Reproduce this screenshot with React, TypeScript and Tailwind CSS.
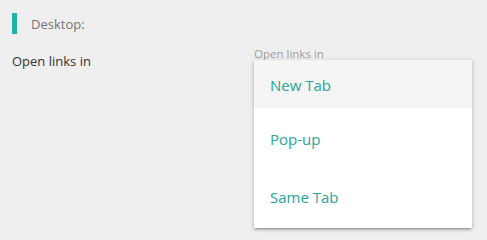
const OPTIONS = [
  { label: "New Tab", cls: "h-[48px] pt-[15px] bg-[#f5f5f5]" },
  { label: "Pop-up", cls: "h-[56px] pt-[21px] bg-white" },
  { label: "Same Tab", cls: "h-[64px] pt-[23px] bg-white" },
];

export default function App() {
  return (
    <div className="w-[487px] h-[240px] bg-[#efefef] font-['Open_Sans',sans-serif] overflow-hidden">
      <div className="flex items-center pt-[13px] pl-[12px]">
        <div className="w-[5px] h-[21px] bg-[#20b2a6]" />
        <span className="ml-[14px] text-[13px] leading-[20px] text-[#757575]">Desktop:</span>
      </div>
      <div className="flex mt-[16px] pl-[12px]">
        <div className="w-[242px] text-[13px] leading-[20px] text-[#333] pt-[1px]">Open links in</div>
        <div className="relative w-[218px]">
          <div className="text-[11.5px] leading-[14px] text-[#9e9e9e] -mt-[3px]">Open links in</div>
          <ul className="absolute left-0 top-[10px] w-[218px] shadow-[0_2px_2px_0_rgba(0,0,0,0.14),0_3px_1px_-2px_rgba(0,0,0,0.12),0_1px_5px_0_rgba(0,0,0,0.2)]">
            {OPTIONS.map((o) => (
              <li key={o.label} className={`${o.cls} pl-[16px] text-[15px] leading-[20px] text-[#26a69a]`}>
                {o.label}
              </li>
            ))}
          </ul>
        </div>
      </div>
    </div>
  );
}
